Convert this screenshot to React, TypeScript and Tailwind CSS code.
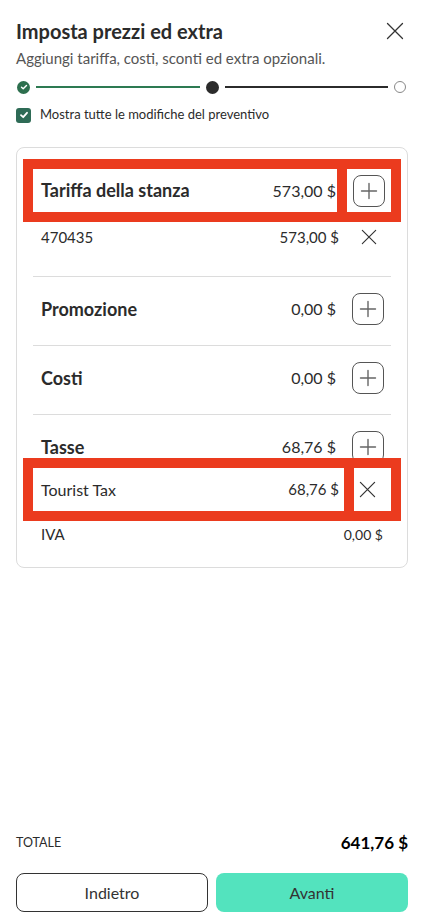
import React from 'react';

const XIcon = ({ size = 18 }: { size?: number }) => (
	<svg width={size} height={size} viewBox="0 0 18 18" fill="none" stroke="#333" strokeWidth="1.3" strokeLinecap="round">
		<path d="M1.5 1.5L16.5 16.5M16.5 1.5L1.5 16.5" />
	</svg>
);

const PlusButton = () => (
	<button className="w-[32px] h-[32px] rounded-[8px] border border-[#555] bg-white flex items-center justify-center shrink-0">
		<svg width="18" height="18" viewBox="0 0 18 18" fill="none" stroke="#666" strokeWidth="1.4" strokeLinecap="round">
			<path d="M9 1.5V16.5M1.5 9H16.5" />
		</svg>
	</button>
);

const SectionHeader = ({ label, amount }: { label: string; amount: string }) => (
	<div className="flex items-center h-[32px] pl-[8px] pr-[7px]">
		<span className="flex-1 font-bold text-[18px]">{label}</span>
		<span className="text-[16px] mr-[16px]">{amount}</span>
		<PlusButton />
	</div>
);

const Divider = () => <div className="h-px bg-[#dcdcdc]" />;

export default function App() {
	return (
		<div
			className="w-[425px] h-[924px] bg-white text-[#2b2b2b] flex flex-col pl-[16px] pr-[17px]"
			style={{ fontFamily: 'Lato, "Noto Sans", sans-serif' }}
		>
			{/* Header */}
			<div className="flex items-center justify-between pt-[18px]">
				<h1 className="text-[20px] leading-[26px] font-bold">Imposta prezzi ed extra</h1>
				<button className="mr-[4px]">
					<XIcon />
				</button>
			</div>
			<p className="mt-[3px] text-[15px] leading-[22px] text-[#555]">
				Aggiungi tariffa, costi, sconti ed extra opzionali.
			</p>

			{/* Stepper */}
			<div className="mt-[11px] flex items-center h-[14px] pr-[2px]">
				<div className="w-[13px] h-[13px] rounded-full bg-[#2d6f4e] flex items-center justify-center ml-[1px]">
					<svg width="8" height="8" viewBox="0 0 8 8" fill="none" stroke="white" strokeWidth="1.4" strokeLinecap="round" strokeLinejoin="round">
						<path d="M1.5 4.2L3.2 5.8L6.5 2.4" />
					</svg>
				</div>
				<div className="flex-1 h-[2px] bg-[#2d7a52] mx-[6px]" />
				<div className="w-[13px] h-[13px] rounded-full bg-[#2b2b2b]" />
				<div className="flex-1 h-[2px] bg-[#2b2b2b] mx-[6px]" />
				<div className="w-[12px] h-[12px] rounded-full border border-[#888] bg-white" />
			</div>

			{/* Checkbox */}
			<label className="mt-[13px] flex items-center gap-[9px] h-[16px]">
				<span className="w-[15px] h-[15px] rounded-[3px] bg-[#2e6b56] flex items-center justify-center">
					<svg width="10" height="10" viewBox="0 0 10 10" fill="none" stroke="white" strokeWidth="1.8" strokeLinecap="round" strokeLinejoin="round">
						<path d="M2 5.2L4.2 7.2L8 2.8" />
					</svg>
				</span>
				<span className="text-[13px]">Mostra tutte le modifiche del preventivo</span>
			</label>

			{/* Card */}
			<div className="mt-[24px] border border-[#dcdcdc] rounded-[8px] px-[16px] pt-[11px] pb-[20px]">
				{/* Tariffa della stanza */}
				<div className="relative z-10 -mx-[10px] bg-[#eb3b1e] p-[10px] flex gap-[10px]">
					<div className="flex-1 bg-white h-[43px] flex items-center pl-[8px] pr-[1px]">
						<span className="flex-1 font-bold text-[18px]">Tariffa della stanza</span>
						<span className="text-[16px]">573,00 $</span>
					</div>
					<div className="w-[44px] bg-white flex items-center justify-center">
						<PlusButton />
					</div>
				</div>
				<div className="flex items-center h-[30px] pl-[8px]">
					<span className="flex-1 text-[15px]">470435</span>
					<span className="text-[15px] mr-[8px]">573,00 $</span>
					<div className="w-[44px] flex items-center justify-center">
						<XIcon size={16} />
					</div>
				</div>
				<div className="h-[24px]" />
				<Divider />

				<div className="pt-[16px] pb-[20px]">
					<SectionHeader label="Promozione" amount="0,00 $" />
				</div>
				<Divider />

				<div className="pt-[16px] pb-[20px]">
					<SectionHeader label="Costi" amount="0,00 $" />
				</div>
				<Divider />

				<div className="pt-[16px]">
					<SectionHeader label="Tasse" amount="68,76 $" />
				</div>
				<div className="relative z-10 -mt-[5px] -mx-[10px] bg-[#eb3b1e] p-[10px] flex gap-[10px]">
					<div className="flex-1 bg-white h-[43px] flex items-center pl-[8px] pr-[5px]">
						<span className="flex-1 text-[16px]">Tourist Tax</span>
						<span className="text-[15px]">68,76 $</span>
					</div>
					<div className="w-[37px] bg-white flex items-center pl-[5px]">
						<XIcon size={17} />
					</div>
				</div>
				<div className="flex items-center h-[26px] pl-[8px] pr-[8px]">
					<span className="flex-1 text-[15px]">IVA</span>
					<span className="text-[14px]">0,00 $</span>
				</div>
			</div>

			<div className="flex-1" />

			{/* Footer */}
			<div className="flex items-center justify-between h-[24px]">
				<span className="text-[12.5px]">TOTALE</span>
				<span className="text-[17px] font-bold text-black">641,76 $</span>
			</div>
			<div className="mt-[18px] mb-[12px] grid grid-cols-2 gap-[8px]">
				<button className="h-[39px] rounded-[8px] border border-[#333] bg-white text-[16px] text-[#333]">Indietro</button>
				<button className="h-[39px] rounded-[8px] bg-[#53e3be] text-[16px] text-[#333]">Avanti</button>
			</div>
		</div>
	);
}
